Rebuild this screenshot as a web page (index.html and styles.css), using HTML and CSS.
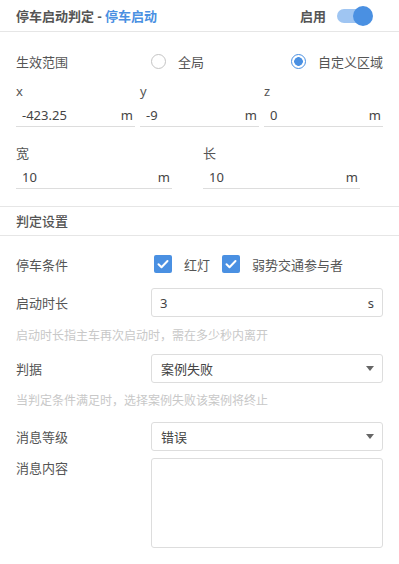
FILE: index.html
```html
<!DOCTYPE html>
<html lang="zh-CN">
<head>
    <meta charset="UTF-8">
    <meta name="viewport" content="width=device-width, initial-scale=1.0">
    <title>停车启动判定</title>
    <link rel="stylesheet" href="styles.css">
</head>
<body>
    <div class="header">
        <div class="title">停车启动判定 - <span class="title-sub">停车启动</span></div>
        <div class="enable">
            <span>启用</span>
            <div class="switch"><div class="knob"></div></div>
        </div>
    </div>

    <div class="row scope">
        <div class="label">生效范围</div>
        <div class="radios">
            <div class="radio"><span class="dot"></span>全局</div>
            <div class="radio"><span class="dot checked"></span>自定义区域</div>
        </div>
    </div>

    <div class="grid xyz">
        <div class="field">
            <div class="field-label">x</div>
            <div class="line-input"><span class="value">-423.25</span><span class="unit">m</span></div>
        </div>
        <div class="field">
            <div class="field-label">y</div>
            <div class="line-input"><span class="value">-9</span><span class="unit">m</span></div>
        </div>
        <div class="field">
            <div class="field-label">z</div>
            <div class="line-input"><span class="value">0</span><span class="unit">m</span></div>
        </div>
    </div>

    <div class="grid size">
        <div class="field">
            <div class="field-label">宽</div>
            <div class="line-input"><span class="value">10</span><span class="unit">m</span></div>
        </div>
        <div class="field">
            <div class="field-label">长</div>
            <div class="line-input"><span class="value">10</span><span class="unit">m</span></div>
        </div>
    </div>

    <div class="section">判定设置</div>

    <div class="row cond">
        <div class="label">停车条件</div>
        <div class="checks">
            <div class="check">
                <span class="box"><svg width="18" height="18" viewBox="0 0 18 18"><path d="M4.5 9.2l3 3 6-6.2" fill="none" stroke="#fff" stroke-width="2" stroke-linecap="round" stroke-linejoin="round"/></svg></span>
                红灯
            </div>
            <div class="check">
                <span class="box"><svg width="18" height="18" viewBox="0 0 18 18"><path d="M4.5 9.2l3 3 6-6.2" fill="none" stroke="#fff" stroke-width="2" stroke-linecap="round" stroke-linejoin="round"/></svg></span>
                弱势交通参与者
            </div>
        </div>
    </div>

    <div class="row duration">
        <div class="label">启动时长</div>
        <div class="box-input"><span class="value">3</span><span class="unit">s</span></div>
    </div>
    <div class="hint">启动时长指主车再次启动时，需在多少秒内离开</div>

    <div class="row judge">
        <div class="label">判据</div>
        <div class="box-input select"><span class="value">案例失败</span><span class="caret"></span></div>
    </div>
    <div class="hint">当判定条件满足时，选择案例失败该案例将终止</div>

    <div class="row level">
        <div class="label">消息等级</div>
        <div class="box-input select"><span class="value">错误</span><span class="caret"></span></div>
    </div>

    <div class="row message">
        <div class="label">消息内容</div>
        <div class="textarea"></div>
    </div>

    <div class="footer-line"></div>
</body>
</html>
```

FILE: styles.css
```css
body {
    margin: 0;
    font-family: "Noto Sans", "Noto Sans CJK SC", sans-serif;
    font-size: 13px;
    color: #555;
    background: #fff;
}
.header {
    height: 31px;
    border-bottom: 1px solid #e6e6e6;
    display: flex;
    align-items: center;
    justify-content: space-between;
    padding: 0 30px 0 16px;
}
.title {
    font-weight: bold;
    color: #555;
}
.title-sub {
    color: #4a90e2;
}
.enable {
    display: flex;
    align-items: center;
    font-weight: bold;
}
.switch {
    position: relative;
    width: 32px;
    height: 14px;
    margin-left: 11px;
    border-radius: 7px;
    background: #9fc5f2;
}
.knob {
    position: absolute;
    right: -4px;
    top: -3px;
    width: 20px;
    height: 20px;
    border-radius: 50%;
    background: #4a90e2;
}
.row {
    display: flex;
    align-items: center;
    padding: 0 16px;
}
.label {
    width: 135px;
    flex: none;
}
.scope {
    height: 26px;
    margin-top: 16px;
}
.radios {
    flex: 1;
    display: flex;
    justify-content: space-between;
}
.radio {
    display: flex;
    align-items: center;
}
.dot {
    width: 13px;
    height: 13px;
    border: 1.5px solid #c4c4c4;
    border-radius: 50%;
    margin-right: 12px;
    box-sizing: content-box;
}
.dot.checked {
    border-color: #4a90e2;
    background: radial-gradient(circle, #4a90e2 0, #4a90e2 4px, #fff 4.6px);
}
.grid {
    display: grid;
    padding: 0 16px;
}
.xyz {
    grid-template-columns: 119px 119px 119px;
    column-gap: 5px;
    margin-top: 8px;
}
.size {
    grid-template-columns: 156px 157px;
    column-gap: 31px;
    margin-top: 17px;
}
.field-label {
    line-height: 18px;
}
.line-input {
    height: 23px;
    padding: 3px 2px 0 6px;
    border-bottom: 1px solid #ddd;
    display: flex;
    align-items: center;
    justify-content: space-between;
    color: #444;
}
.section {
    margin-top: 17px;
    border-top: 1px solid #e6e6e6;
    border-bottom: 1px solid #e6e6e6;
    height: 28px;
    line-height: 28px;
    padding-left: 16px;
    font-weight: 500;
}
.cond {
    height: 18px;
    margin-top: 19px;
}
.checks {
    display: flex;
    align-items: center;
    margin-left: 3px;
}
.check {
    display: flex;
    align-items: center;
    margin-right: 12px;
}
.box {
    width: 18px;
    height: 18px;
    border-radius: 2px;
    background: #4a90e2;
    margin-right: 12px;
    display: flex;
}
.duration {
    margin-top: 15px;
}
.box-input {
    flex: 1;
    height: 27px;
    border: 1px solid #ddd;
    border-radius: 3px;
    display: flex;
    align-items: center;
    justify-content: space-between;
    padding: 0 8px;
    color: #444;
}
.select .value {
    padding-left: 1px;
}
.caret {
    width: 0;
    height: 0;
    border-left: 4.5px solid transparent;
    border-right: 4.5px solid transparent;
    border-top: 5px solid #666;
}
.hint {
    margin-top: 10px;
    padding-left: 16px;
    line-height: 18px;
    font-size: 12px;
    color: #c8c8c8;
}
.judge {
    margin-top: 9px;
}
.judge + .hint {
    margin-top: 9px;
}
.level {
    margin-top: 12px;
}
.message {
    margin-top: 7px;
    align-items: flex-start;
}
.message .label {
    line-height: 20px;
}
.textarea {
    flex: 1;
    height: 88px;
    border: 1px solid #ddd;
    border-radius: 3px;
}
.footer-line {
    margin-top: 16px;
    border-top: 1px solid #eee;
}
```
